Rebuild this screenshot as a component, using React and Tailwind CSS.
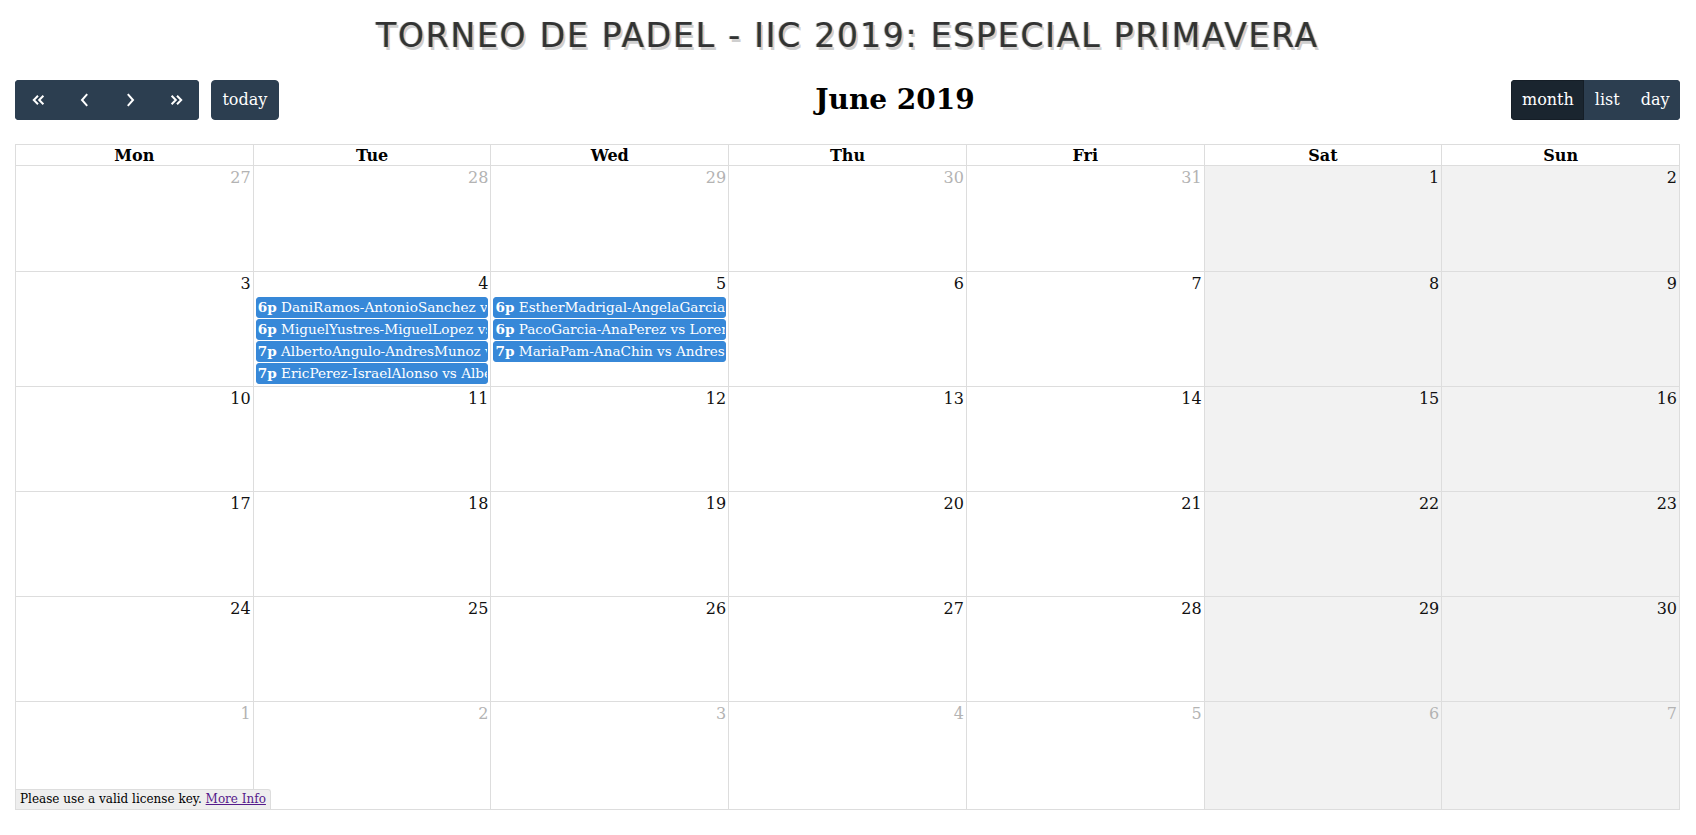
import React from 'react';

const events = {
  4: [
    ['6p', 'DaniRamos-AntonioSanchez vs JuanGomez-PedroRuiz'],
    ['6p', 'MiguelYustres-MiguelLopez vs CarlosDiaz-LuisMoreno'],
    ['7p', 'AlbertoAngulo-AndresMunoz vs SergioGil-PabloNavarro'],
    ['7p', 'EricPerez-IsraelAlonso vs AlbertoRomero-JavierTorres'],
  ],
  5: [
    ['6p', 'EstherMadrigal-AngelaGarcia vs LauraMartin-SaraJimenez'],
    ['6p', 'PacoGarcia-AnaPerez vs LorenaVega-DavidCastro'],
    ['7p', 'MariaPam-AnaChin vs AndresSoto-ElenaRubio'],
  ],
};

const weeks = [
  [27, 28, 29, 30, 31, 1, 2].map((d, i) => ({ d, other: i < 5 })),
  [3, 4, 5, 6, 7, 8, 9].map((d) => ({ d, ev: events[d] })),
  [10, 11, 12, 13, 14, 15, 16].map((d) => ({ d })),
  [17, 18, 19, 20, 21, 22, 23].map((d) => ({ d })),
  [24, 25, 26, 27, 28, 29, 30].map((d) => ({ d })),
  [1, 2, 3, 4, 5, 6, 7].map((d) => ({ d, other: true })),
];

const rowHeights = ['h-[106px]', 'h-[115px]', 'h-[105px]', 'h-[105px]', 'h-[105px]', 'h-[108px]'];
const dayNames = ['Mon', 'Tue', 'Wed', 'Thu', 'Fri', 'Sat', 'Sun'];

const Chevron = ({ dir }) => (
  <svg width="9" height="14" viewBox="0 0 9 14" fill="none" stroke="white" strokeWidth="2">
    {dir === 'left' ? <path d="M7.2 1.2 L2 7 L7.2 12.8" /> : <path d="M1.8 1.2 L7 7 L1.8 12.8" />}
  </svg>
);

const DoubleChevron = ({ dir }) => (
  <svg width="13" height="10" viewBox="0 0 13 10" fill="none" stroke="white" strokeWidth="2">
    {dir === 'left' ? (
      <path d="M6 0.8 L1.8 5 L6 9.2 M11.4 0.8 L7.2 5 L11.4 9.2" />
    ) : (
      <path d="M1.6 0.8 L5.8 5 L1.6 9.2 M7 0.8 L11.2 5 L7 9.2" />
    )}
  </svg>
);

const navBtn = 'w-[46px] h-[40px] flex items-center justify-center bg-[#2c3e50] border border-[#2c3e50]';

export default function App() {
  return (
    <div className="min-h-screen bg-white pl-[15px] pr-[16px] font-['DejaVu_Serif',serif] text-black">
      <h1 className="pt-[17px] text-center font-['DejaVu_Sans',sans-serif] text-[33px] leading-[38px] tracking-[1.8px] text-[#333] [text-shadow:-1px_0_0_#9ccaf0,1px_0_0_#f2bc84,2px_3px_0_#cfcfcf]">
        TORNEO DE PADEL - IIC 2019: ESPECIAL PRIMAVERA
      </h1>

      <div className="mt-[25px] flex h-[40px] items-center justify-between">
        <div className="flex items-center">
          <div className="flex overflow-hidden rounded-[4px]">
            <button className={navBtn}><DoubleChevron dir="left" /></button>
            <button className={navBtn}><Chevron dir="left" /></button>
            <button className={navBtn}><Chevron dir="right" /></button>
            <button className={navBtn}><DoubleChevron dir="right" /></button>
          </div>
          <button className="ml-[12px] h-[40px] rounded-[4px] border border-[#2c3e50] bg-[#2c3e50] px-[10.4px] text-[16px] text-white">
            today
          </button>
        </div>
        <h2 className="text-[28px] font-bold leading-normal">June 2019</h2>
        <div className="flex overflow-hidden rounded-[4px] text-[16px] text-white">
          <button className="h-[40px] border border-[#151e27] bg-[#1a252f] px-[9.5px]">month</button>
          <button className="h-[40px] border border-[#2c3e50] bg-[#2c3e50] px-[9.5px]">list</button>
          <button className="h-[40px] border border-[#2c3e50] bg-[#2c3e50] px-[9.5px]">day</button>
        </div>
      </div>

      <div className="relative mt-[24px] border-l border-t border-[#ddd]">
        <div className="grid grid-cols-7">
          {dayNames.map((n) => (
            <div key={n} className="h-[21px] border-b border-r border-[#ddd] pt-[1px] text-center text-[16px] font-bold leading-[19px]">
              {n}
            </div>
          ))}
        </div>
        {weeks.map((week, wi) => (
          <div key={wi} className={`grid grid-cols-7 ${rowHeights[wi]}`}>
            {week.map((cell, ci) => (
              <div
                key={ci}
                className={`min-w-0 border-b border-r border-[#ddd] ${ci >= 5 ? 'bg-[#f2f2f2]' : 'bg-white'}`}
              >
                <div className={`px-[2px] pb-[1px] text-right text-[16px] leading-normal ${cell.other ? 'text-[#b3b3b3]' : 'text-[#111]'}`}>
                  {cell.d}
                </div>
                {cell.ev && (
                  <div>
                    {cell.ev.map(([t, title], i) => (
                      <div
                        key={i}
                        className="mx-[2px] mb-[1px] overflow-hidden whitespace-nowrap rounded-[3px] border border-[#3788d8] bg-[#3788d8] px-[1px] text-[13.6px] leading-[1.4] text-white"
                      >
                        <span className="font-bold">{t}</span> {title}
                      </div>
                    ))}
                  </div>
                )}
              </div>
            ))}
          </div>
        ))}
        <div className="absolute bottom-[1px] left-0 rounded-tr-[3px] border-r border-t border-[#ddd] bg-[#eee] px-[4px] py-[2px] text-[12px] leading-[15px]">
          Please use a valid license key. <a href="#" className="text-[#551a8b] underline">More Info</a>
        </div>
      </div>
    </div>
  );
}
